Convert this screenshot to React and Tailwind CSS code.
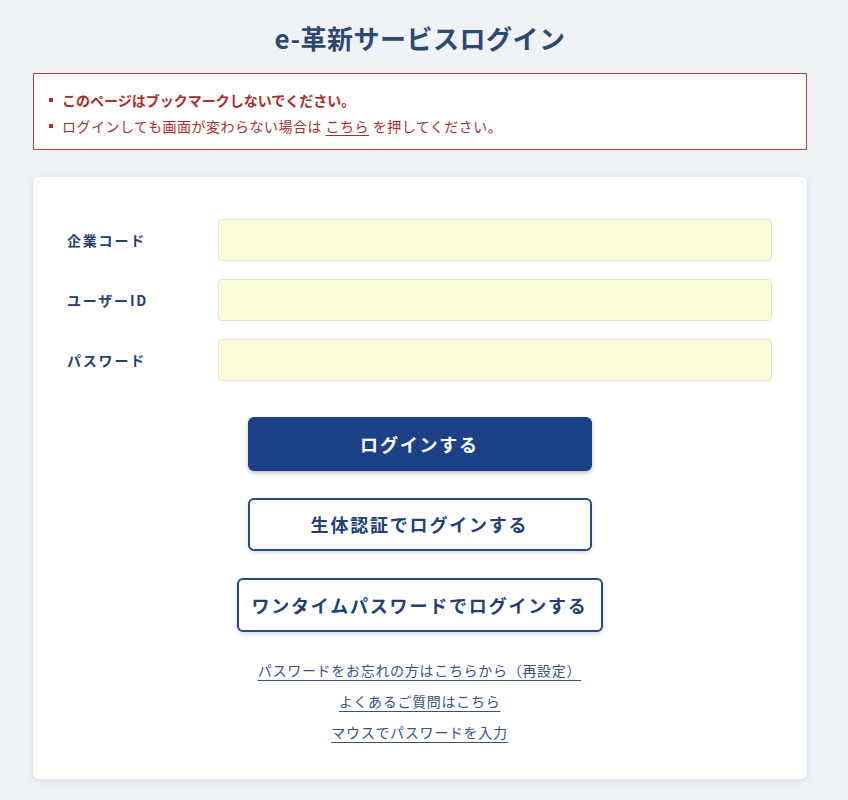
export default function App() {
  const font = { fontFamily: '"Noto Sans CJK JP", "Noto Sans", sans-serif' };
  const fields = ["企業コード", "ユーザーID", "パスワード"];
  return (
    <div className="min-h-[800px] bg-[#eff2f7] pl-[33px] pr-[41px]" style={font}>
      <h1 className="pt-[18px] text-center text-[26px] leading-[40px] font-bold tracking-[0.5px] text-[#2d4872]">
        e-革新サービスログイン
      </h1>
      <div className="mt-[15px] border border-[#b2423f] bg-white pl-[15px] pt-[13px] pb-[10px] text-[14px] leading-[26px] text-[#a3302b]">
        <div className="flex items-center gap-[9px] font-bold">
          <span className="h-[4px] w-[4px] bg-[#a3302b]" />
          <span>このページはブックマークしないでください。</span>
        </div>
        <div className="flex items-center gap-[9px]">
          <span className="h-[4px] w-[4px] bg-[#a3302b]" />
          <span className="tracking-[0.5px]">
            ログインしても画面が変わらない場合は <span className="underline underline-offset-[3px]">こちら</span> を押してください。
          </span>
        </div>
      </div>
      <div className="mt-[27px] rounded-[6px] bg-white pl-[34px] pr-[35px] pt-[42px] pb-[31px] shadow-[0_2px_6px_rgba(30,50,90,0.12)]">
        <div className="flex flex-col gap-[18px]">
          {fields.map((f) => (
            <div key={f} className="flex items-center">
              <div className="w-[151px] text-[14px] font-bold tracking-[1.8px] text-[#233f6e]">{f}</div>
              <div className="h-[42px] flex-1 rounded-[4px] border border-[#e6e3cc] bg-[#fefedc]" />
            </div>
          ))}
        </div>
        <div className="mt-[36px] flex flex-col items-center">
          <button className="h-[54px] w-[344px] rounded-[6px] bg-[#1c4186] text-[18px] font-bold tracking-[1.8px] text-white shadow-[0_2px_4px_rgba(0,0,0,0.25)]">
            ログインする
          </button>
          <button className="mt-[27px] h-[53px] w-[344px] rounded-[6px] border-2 border-[#264a85] bg-white text-[18px] font-bold tracking-[1.8px] text-[#223f74] shadow-[0_2px_4px_rgba(0,0,0,0.15)]">
            生体認証でログインする
          </button>
          <button className="mt-[27px] h-[54px] w-[366px] rounded-[6px] border-2 border-[#264a85] bg-white text-[18px] font-bold tracking-[1.8px] text-[#223f74] shadow-[0_2px_4px_rgba(0,0,0,0.15)]">
            ワンタイムパスワードでログインする
          </button>
          <div className="mt-[23px] flex flex-col items-center text-[14px] leading-[31px] tracking-[0.7px] text-[#34527f]">
            <a className="underline underline-offset-[4px]">パスワードをお忘れの方はこちらから（再設定）</a>
            <a className="underline underline-offset-[4px]">よくあるご質問はこちら</a>
            <a className="underline underline-offset-[4px]">マウスでパスワードを入力</a>
          </div>
        </div>
      </div>
    </div>
  );
}
